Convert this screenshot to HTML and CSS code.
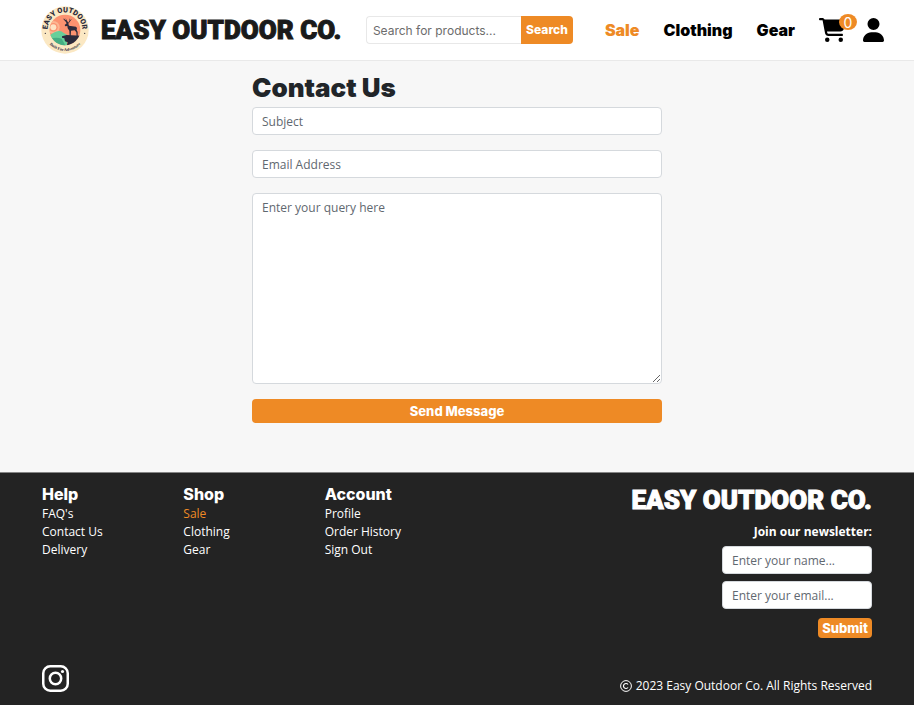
FILE: index.html
```html
<!DOCTYPE html>
<html lang="en">
<head>
<meta charset="utf-8">
<meta name="viewport" content="width=device-width, initial-scale=1">
<title>Contact Us | Easy Outdoor Co.</title>
<link rel="stylesheet" href="styles.css">
</head>
<body>
<header class="site-header">
  <a class="brand" href="#">
    <svg class="brand-logo" viewBox="0 0 144 144" aria-hidden="true">
      <defs>
        <clipPath id="scene"><circle cx="72" cy="72" r="46"/></clipPath>
        <path id="arc-top" d="M23 88a52 52 0 1 1 98 0"/>
        <path id="arc-bottom" d="M9 72a63 63 0 0 0 126 0"/>
      </defs>
      <circle cx="72" cy="72" r="71" fill="#fbe8c3"/>
      <g clip-path="url(#scene)">
        <path d="M20 20h104v104H20z" fill="#fb9270"/>
        <circle cx="37" cy="64" r="19" fill="#fcb692"/>
        <circle cx="37" cy="64" r="13" fill="#fb9270"/>
        <circle cx="37" cy="64" r="9" fill="#fde3c4"/>
        <path d="M20 91c14-7 24-18 36-16 9 1 13 9 22 11v40H20z" fill="#67cf9a"/>
        <path d="M20 101c16-6 30-7 42-3l14 26H20z" fill="#45ad83"/>
        <path d="M63 91l14-4 45 2v42H86l-8-14 2-8-8-3-2-9-7-2z" fill="#2b2b3c"/>
        <path d="M71 57l6-5-5-8-7-4 4 1-1-5 4 5 3 1-1-6 3 7 5 7 4-7-1-6 3 5 5-3-5 6-6 8 2 6 10 2 11 1 3 4-1 6 3 6v16h-3l-1-15-5-6-11 1-1 20h-3l-1-20-5-7-1-7-6 1z" fill="#2b2b3c"/>
      </g>
      <text class="logo-name"><textPath href="#arc-top" startOffset="50%">EASY OUTDOOR</textPath></text>
      <text class="logo-motto"><textPath href="#arc-bottom" startOffset="50%">Built For Adventure</textPath></text>
      <circle cx="13" cy="82" r="2" fill="#2b2b3c"/><circle cx="131" cy="82" r="2" fill="#2b2b3c"/>
    </svg>
    <span class="wordmark">EASY OUTDOOR CO.</span>
  </a>
  <form class="search">
    <input class="search-input" type="search" aria-label="Search for products" placeholder="Search for products...">
    <button class="search-button" type="button">Search</button>
  </form>
  <nav class="main-nav" aria-label="Main">
    <a class="sale" href="#">Sale</a>
    <a href="#">Clothing</a>
    <a href="#">Gear</a>
  </nav>
  <div class="actions">
    <a class="cart" href="#" aria-label="Cart">
      <svg class="cart-icon" viewBox="0 0 576 512" aria-hidden="true"><path d="M0 24C0 10.700 10.700 0 24 0h45.500c22 0 41.500 12.800 50.600 32h411c26.300 0 45.500 25 38.600 50.400l-41 152.300c-8.500 31.400-37 53.300-69.500 53.300H170.700l5.400 28.500c2.200 11.300 12.100 19.500 23.600 19.500H488c13.300 0 24 10.700 24 24s-10.700 24-24 24H199.700c-34.600 0-64.300-24.600-70.700-58.500L77.400 54.500c-.7-3.800-4-6.500-7.900-6.500H24C10.700 48 0 37.300 0 24zm128 440a48 48 0 1 1 96 0 48 48 0 1 1-96 0zm336-48a48 48 0 1 1 0 96 48 48 0 1 1 0-96z"/></svg>
      <span class="cart-count">0</span>
    </a>
    <a class="account" href="#" aria-label="Account">
      <svg class="user-icon" viewBox="0 0 448 512" aria-hidden="true"><path d="M224 256A128 128 0 1 0 224 0a128 128 0 1 0 0 256zm-45.700 48C79.800 304 0 383.800 0 482.300 0 498.700 13.300 512 29.700 512h388.600c16.400 0 29.700-13.300 29.700-29.700 0-98.500-79.800-178.300-178.300-178.300h-91.400z"/></svg>
    </a>
  </div>
</header>

<main class="content">
  <form class="contact">
    <h1>Contact Us</h1>
    <input class="field" type="text" aria-label="Subject" placeholder="Subject">
    <input class="field" type="email" aria-label="Email Address" placeholder="Email Address">
    <textarea class="field message" aria-label="Query" placeholder="Enter your query here"></textarea>
    <button class="send" type="button">Send Message</button>
  </form>
</main>

<footer class="site-footer">
  <div class="footer-top">
    <nav class="footer-links" aria-label="Footer">
      <section>
        <h2>Help</h2>
        <a href="#">FAQ's</a>
        <a href="#">Contact Us</a>
        <a href="#">Delivery</a>
      </section>
      <section>
        <h2>Shop</h2>
        <a class="sale" href="#">Sale</a>
        <a href="#">Clothing</a>
        <a href="#">Gear</a>
      </section>
      <section>
        <h2>Account</h2>
        <a href="#">Profile</a>
        <a href="#">Order History</a>
        <a href="#">Sign Out</a>
      </section>
    </nav>
    <form class="newsletter">
      <span class="wordmark">EASY OUTDOOR CO.</span>
      <p>Join our newsletter:</p>
      <input class="field" type="text" aria-label="Name" placeholder="Enter your name...">
      <input class="field" type="email" aria-label="Email" placeholder="Enter your email...">
      <button class="submit" type="button">Submit</button>
    </form>
  </div>
  <div class="footer-bottom">
    <a href="#" aria-label="Instagram">
      <svg class="instagram" viewBox="0 0 27 27" fill="none" stroke="#fff" stroke-width="2.500" aria-hidden="true"><rect x="1.250" y="1.250" width="24.500" height="24.500" rx="7"/><circle cx="13.500" cy="13.500" r="5.700"/><circle cx="20.500" cy="6.500" r="1.600" fill="#fff" stroke="none"/></svg>
    </a>
    <p class="copyright">
      <svg class="copy-icon" viewBox="0 0 12 12" fill="none" stroke="#fff" role="img" aria-label="Copyright"><circle cx="6" cy="6" r="5.400"/><path d="M8 4.500a2.500 2.500 0 1 0 0 3" stroke-width="1.200"/></svg>
      <span>2023 Easy Outdoor Co. All Rights Reserved</span>
    </p>
  </div>
</footer>
</body>
</html>
```

FILE: styles.css
```css
* { box-sizing: border-box; }

body {
  margin: 0;
  min-height: 100vh;
  display: flex;
  flex-direction: column;
  background: #f7f7f7;
  color: #212529;
  font: 500 12px/18px "Open Sans", sans-serif;
}

a { color: inherit; text-decoration: none; }
h1, h2, p { margin: 0; }
input, textarea, button { font: inherit; margin: 0; }
svg { display: block; }

.site-header {
  display: flex;
  align-items: center;
  height: 61px;
  padding: 0 30px 0 41px;
  background: #fff;
  border-bottom: 1px solid #e9e9e9;
}

.brand {
  display: flex;
  align-items: center;
  gap: 12px;
  color: #1a1a1a;
}

.brand-logo { width: 48px; height: 48px; }

.logo-name {
  font: 900 22px Roboto, sans-serif;
  text-anchor: middle;
  fill: #2b2b3c;
}

.logo-motto {
  font: 700 12px "Liberation Serif", serif;
  text-anchor: middle;
  fill: #2b2b3c;
}

.wordmark {
  font: 900 26px/32px Roboto, sans-serif;
  white-space: nowrap;
  -webkit-text-stroke: 1px currentColor;
}

.search {
  display: flex;
  width: 207px;
  margin-left: auto;
}

.search-input {
  flex: 1;
  min-width: 0;
  height: 28px;
  padding: 0 6px;
  border: 1px solid #e8e8e8;
  border-right: 0;
  border-radius: 4px 0 0 4px;
  font: 400 12px Inter, sans-serif;
}

.search-input::placeholder { color: #6c6c6c; opacity: 1; }

.search-button, .send, .submit {
  border: 0;
  background: #ee8a25;
  color: #fff;
  font-family: Inter, sans-serif;
  font-size: 12px;
  font-weight: 800;
}

.search-button {
  height: 28px;
  padding: 0 5px;
  border-radius: 0 4px 4px 0;
}

.main-nav {
  display: flex;
  gap: 24px;
  margin-left: 32px;
  color: #000;
  font: 900 16px/20px Inter, sans-serif;
}

.main-nav .sale, .footer-links .sale { color: #ee8a25; }

.actions {
  display: flex;
  align-items: center;
  gap: 17px;
  margin-left: 24px;
}

.cart { position: relative; }
.cart-icon { width: 27px; height: 24px; }
.user-icon { width: 21px; height: 24px; }

.cart-count {
  position: absolute;
  top: -4px;
  right: -11px;
  width: 18px;
  height: 16px;
  border-radius: 50%;
  background: #ee8a25;
  color: #fff;
  font: 400 14px/17px Inter, sans-serif;
  text-align: center;
}

.content {
  flex: 1;
  padding: 11px 24px 49px;
}

.contact {
  display: flex;
  flex-direction: column;
  gap: 15px;
  max-width: 410px;
  margin: 0 auto;
}

h1 {
  margin-bottom: -11px;
  font: 900 26px/31px Inter, sans-serif;
}

.field {
  width: 100%;
  height: 28px;
  padding: 4px 9px;
  border: 1px solid #d5d9dd;
  border-radius: 4px;
  background: #fff;
}

.field::placeholder { color: #5f6870; opacity: 1; }

.message {
  display: block;
  height: 191px;
  padding-top: 5px;
  resize: vertical;
}

.send {
  height: 24px;
  padding: 0;
  border-radius: 4px;
}

.send, .submit { font-size: 13px; }

.site-footer {
  padding: 11px 42px 10px;
  background: #232323;
  color: #fff;
  border-top: 1px solid #858585;
}

.footer-top {
  display: flex;
  justify-content: space-between;
}

.footer-links {
  flex: 0 1 424px;
  display: grid;
  grid-template-columns: repeat(3, 1fr);
}

.footer-links a { display: block; }

h2 {
  margin-bottom: 1px;
  font: 800 16px/20px Inter, sans-serif;
}

.newsletter {
  display: flex;
  flex-direction: column;
  align-items: flex-end;
}

.newsletter p {
  margin: 7px 0 5px;
  font-weight: 700;
}

.newsletter .field {
  width: 150px;
  margin-bottom: 7px;
}

.submit {
  height: 20px;
  margin-top: 2px;
  padding: 0 4px;
  border-radius: 4px;
}

.footer-bottom {
  display: flex;
  align-items: flex-end;
  justify-content: space-between;
  margin-top: 27px;
}

.instagram {
  width: 27px;
  height: 27px;
  margin-bottom: 3px;
}

.copyright {
  display: flex;
  align-items: center;
  gap: 4px;
}

.copy-icon { width: 12px; height: 12px; }
```
